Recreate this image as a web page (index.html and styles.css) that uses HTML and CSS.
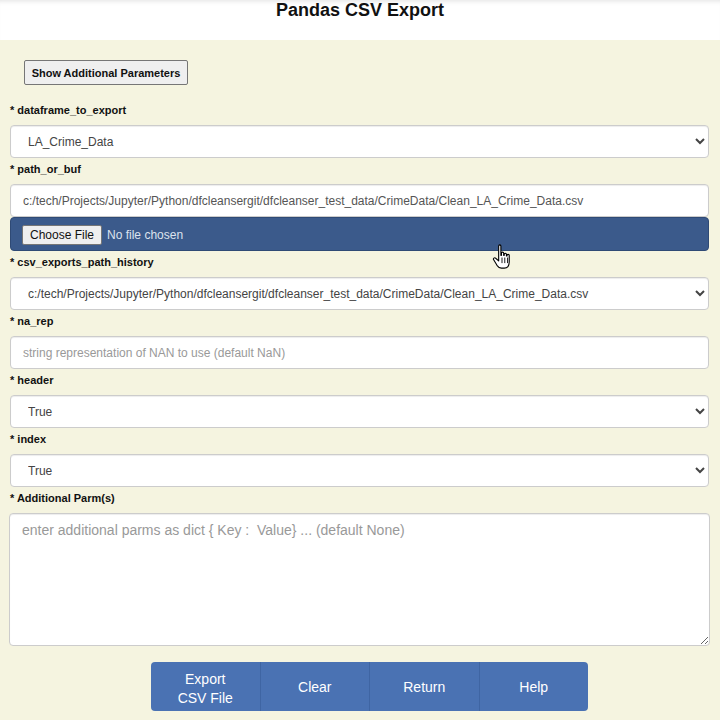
FILE: index.html
```html
<!DOCTYPE html>
<html>
<head>
<meta charset="utf-8">
<link rel="stylesheet" href="styles.css">
</head>
<body>
<div class="header"><h1 class="title">Pandas CSV Export</h1></div>
<div class="main">
  <div class="toggle-row"><button class="toggle-btn">Show Additional Parameters</button></div>
  <div class="field">
    <label class="lbl">* dataframe_to_export</label>
    <select class="ctl sel"><option>LA_Crime_Data</option></select>
  </div>
  <div class="field">
    <label class="lbl">* path_or_buf</label>
    <input class="ctl inp" type="text" value="c:/tech/Projects/Jupyter/Python/dfcleansergit/dfcleanser_test_data/CrimeData/Clean_LA_Crime_Data.csv">
    <div class="filebar"><input class="file" type="file"></div>
  </div>
  <div class="field">
    <label class="lbl">* csv_exports_path_history</label>
    <select class="ctl sel"><option>c:/tech/Projects/Jupyter/Python/dfcleansergit/dfcleanser_test_data/CrimeData/Clean_LA_Crime_Data.csv</option></select>
  </div>
  <div class="field">
    <label class="lbl">* na_rep</label>
    <input class="ctl inp" type="text" placeholder="string representation of NAN to use (default NaN)">
  </div>
  <div class="field">
    <label class="lbl">* header</label>
    <select class="ctl sel"><option>True</option></select>
  </div>
  <div class="field">
    <label class="lbl">* index</label>
    <select class="ctl sel"><option>True</option></select>
  </div>
  <div class="field">
    <label class="lbl">* Additional Parm(s)</label>
    <textarea class="ctl area" placeholder="enter additional parms as dict { Key :  Value} ... (default None)"></textarea>
  </div>
  <div class="actions">
    <button class="act act-two">Export<br>CSV File</button>
    <button class="act">Clear</button>
    <button class="act">Return</button>
    <button class="act">Help</button>
  </div>
  <svg class="cursor" width="20" height="28" viewBox="0 0 18 25">
    <path d="M6 2.5c0-1.2 2-1.2 2 0V11h.5V9c0-1.2 2-1.2 2 0v2h.5V10c0-1.2 2-1.2 2 0v1.5h.5v-.5c0-1.2 2-1.2 2 0v6c0 3-1.5 5.5-4.5 5.5H8.5c-2 0-3-1-4-2.5L1.5 15c-.8-1.2.8-2.4 1.8-1.4L6 16z" fill="#fff" stroke="#000" stroke-width="1" stroke-linejoin="round"/>
    <path d="M9 13v5M11.5 13v5M14 13v5" stroke="#000" stroke-width="0.8"/>
  </svg>
</div>
</body>
</html>
```

FILE: styles.css
```css
* { box-sizing: border-box; }
html, body { margin: 0; padding: 0; }
body {
  width: 720px;
  height: 720px;
  overflow: hidden;
  font-family: "Liberation Sans", Arial, sans-serif;
  background: #f5f4e0;
}
.header {
  height: 40px;
  background: #fff;
  box-shadow: inset 0 5px 5px -4px rgba(0,0,0,0.12);
}
.title {
  margin: 0;
  font-size: 18px;
  line-height: 20px;
  font-weight: bold;
  text-align: center;
  color: #111;
}
.main {
  position: relative;
  padding: 20px 11px 0 10px;
  background: #f5f4e0;
  height: 680px;
}
.toggle-row { padding-left: 14px; height: 39px; }
.toggle-btn {
  width: 164px;
  height: 25px;
  font-family: "Liberation Sans", Arial, sans-serif;
  font-size: 11px;
  font-weight: bold;
  color: #111;
  background: #efefef;
  border: 1px solid #767676;
  border-radius: 2px;
  padding: 0;
}
.field { display: flex; flex-direction: column; }
.lbl {
  display: block;
  font-size: 11px;
  font-weight: bold;
  line-height: 14px;
  padding: 4px 0 8px 0;
  color: #111;
}
.ctl {
  width: 699px;
  height: 33px;
  border: 1px solid #ccc;
  border-radius: 4px;
  background: #fff;
  font-family: "Liberation Sans", Arial, sans-serif;
  font-size: 12px;
  color: #555;
  box-shadow: inset 0 1px 1px rgba(0,0,0,0.075);
}
.sel { padding: 0 8px 0 13px; color: #444; }
.inp { padding: 0 12px; }
.inp::placeholder, .area::placeholder { color: #999; }
.filebar {
  height: 34px;
  width: 699px;
  background: #3b5a8b;
  border: 1px solid #2f4a75;
  border-radius: 4px;
  display: flex;
  align-items: center;
  padding-left: 11px;
  padding-top: 1px;
}
.file {
  font-family: "Liberation Sans", Arial, sans-serif;
  font-size: 12px;
  color: #dde3ee;
}
.file::file-selector-button {
  font-family: "Liberation Sans", Arial, sans-serif;
  font-size: 12px;
  height: 20px;
  padding: 0 7px;
  margin-right: 5px;
  background: #efefef;
  border: 1px solid #767676;
  border-radius: 2px;
  color: #111;
}
.area {
  width: 701px;
  height: 133px;
  margin-left: -1px;
  padding: 8px 12px;
  font-size: 14px;
  resize: both;
  display: block;
}
.actions {
  display: flex;
  margin: 16px 0 0 141px;
  width: 437px;
  height: 49px;
  border-radius: 4px;
  overflow: hidden;
}
.act {
  flex: 1;
  background: #4a72b3;
  border: none;
  border-right: 1px solid #3f65a3;
  color: #fff;
  font-family: "Liberation Sans", Arial, sans-serif;
  font-size: 14px;
  line-height: 20px;
  padding: 0;
}
.act-two { padding-top: 4px; line-height: 19px; }
.act:last-child { border-right: none; }
.cursor {
  position: absolute;
  left: 492px;
  top: 203px;
}
```
